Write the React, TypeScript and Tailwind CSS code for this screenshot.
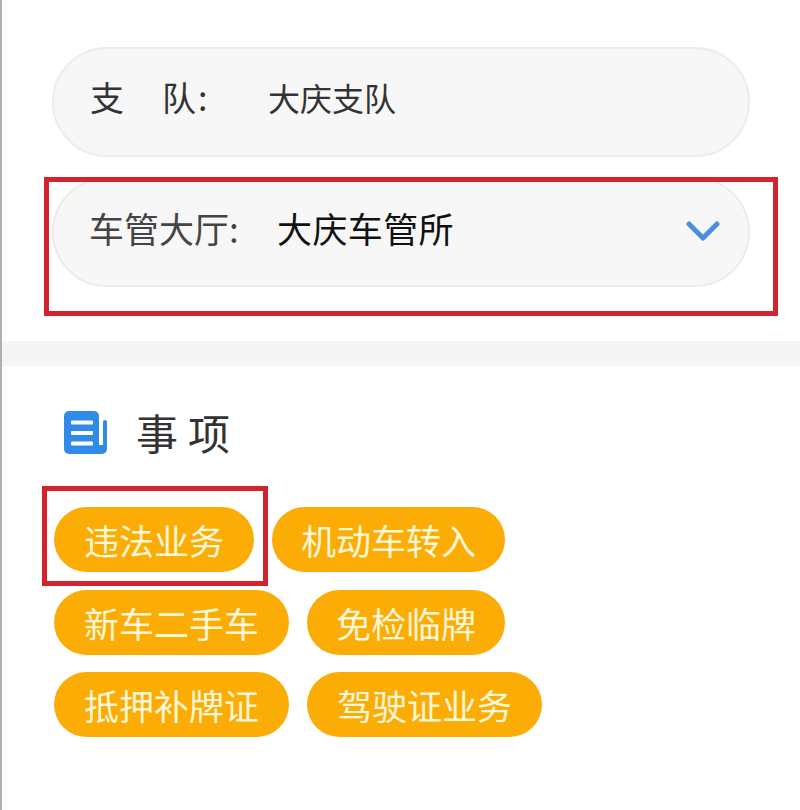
const font = { fontFamily: '"Noto Sans CJK SC", "Noto Sans", sans-serif' };

function Chip({ label, narrow = false }: { label: string; narrow?: boolean }) {
  return (
    <div className={`flex h-[65px] items-center rounded-full bg-[#fcad05] text-[35px] leading-none text-[#fff6d8] ${narrow ? "px-[29px]" : "px-[30px]"}`}>
      {label}
    </div>
  );
}

export default function App() {
  return (
    <div className="relative h-[810px] w-[800px] overflow-hidden border-l-2 border-[#b0b0b0] bg-white" style={font}>
      <div className="flex flex-col gap-[20px] px-[50px] pt-[47px]">
        <div className="flex h-[110px] items-center rounded-full border-2 border-[#ececec] bg-[#f7f7f7] pb-[10px] pl-[36px]">
          <span className="w-[178px] whitespace-pre text-[34px] leading-none tracking-[2px] text-[#333]">支　队:</span>
          <span className="text-[32px] leading-none text-[#333]">大庆支队</span>
        </div>
        <div className="flex h-[110px] items-center rounded-full border-2 border-[#ececec] bg-[#f7f7f7] pl-[35px] pr-[28px]">
          <span className="mb-[10px] w-[188px] text-[35px] leading-none text-[#444]">车管大厅:</span>
          <span className="mb-[10px] flex-1 text-[35px] leading-none tracking-[0.4px] text-[#111]">大庆车管所</span>
          <svg className="mb-[3px]" width="34" height="22" viewBox="0 0 34 22" fill="none">
            <path d="M3 4 L17 18 L31 4" stroke="#4a90e2" strokeWidth="5" strokeLinecap="round" strokeLinejoin="round" />
          </svg>
        </div>
      </div>

      <div className="mt-[54px] h-[25px] bg-[#f5f5f5]" />

      <div className="flex items-center gap-[28px] pl-[62px] pt-[45px]">
        <svg width="44" height="44" viewBox="0 0 44 44" fill="none">
          <path d="M39 11 a2 2 0 0 1 4 0 v27 a5 5 0 0 1 -5 5 H30 V34 h9 Z" fill="#2f8ae8" />
          <rect x="0" y="0" width="35" height="43" rx="5" fill="#2f8ae8" />
          <rect x="7" y="9.5" width="22" height="4" rx="1" fill="#fff" />
          <rect x="7" y="20" width="22" height="4" rx="1" fill="#fff" />
          <rect x="7" y="30.5" width="22" height="4" rx="1" fill="#fff" />
        </svg>
        <span className="mb-[2px] text-[42px] leading-none tracking-[10px] text-[#333]">事项</span>
      </div>

      <div className="flex flex-col gap-[17.5px] pl-[52px] pt-[52px]">
        <div className="flex gap-[18px]">
          <Chip label="违法业务" />
          <Chip label="机动车转入" narrow />
        </div>
        <div className="flex gap-[18px]">
          <Chip label="新车二手车" />
          <Chip label="免检临牌" narrow />
        </div>
        <div className="flex gap-[18px]">
          <Chip label="抵押补牌证" />
          <Chip label="驾驶证业务" />
        </div>
      </div>

      <div className="absolute left-[42px] top-[177px] h-[139px] w-[734px] border-[5px] border-[#d2232f]" />
      <div className="absolute left-[40px] top-[486px] h-[100px] w-[226px] border-[5px] border-[#d2232f]" />
    </div>
  );
}
